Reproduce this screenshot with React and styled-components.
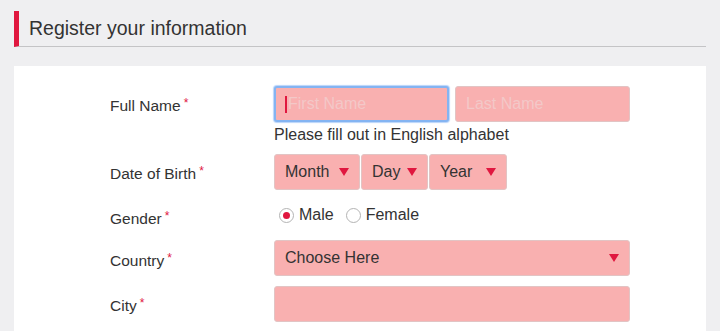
import React from "react";
import styled, { createGlobalStyle, css } from "styled-components";

const Global = createGlobalStyle`
  html, body { margin: 0; padding: 0; }
  body {
    background: #efeff1;
    font-family: "Liberation Sans", Arial, "Noto Sans", sans-serif;
    color: #333;
  }
`;

const Page = styled.div`
  padding: 11px 14px 0;
`;

const Heading = styled.h2`
  margin: 0;
  height: 35px;
  display: flex;
  align-items: center;
  border-left: 5px solid #e0173f;
  border-bottom: 1px solid #c4c4c6;
  padding-left: 10px;
  font-size: 19.5px;
  font-weight: normal;
  color: #333;
`;

const Card = styled.div`
  margin-top: 19px;
  background: #fff;
  padding: 20px 0 20px 96px;
  min-height: 300px;
`;

const Form = styled.div`
  display: grid;
  grid-template-columns: 164px 356px;
  row-gap: 10px;
  align-items: start;
`;

const Label = styled.div`
  box-sizing: border-box;
  height: ${(p) => p.$h || 36}px;
  display: flex;
  align-items: center;
  padding-top: ${(p) => p.$pt ?? 3}px;
  font-size: 15.5px;
  color: #333;
  white-space: nowrap;
`;

const Req = styled.span`
  color: #e0173f;
  font-size: 12px;
  margin-left: 3px;
  position: relative;
  top: -3px;
`;

const Field = styled.div`
  display: flex;
  flex-direction: column;
`;

const InputRow = styled.div`
  display: flex;
  gap: ${(p) => p.$gap ?? 6}px;
`;

const boxBase = css`
  box-sizing: border-box;
  height: 36px;
  background: #f9b0b0;
  border: 1px solid #e2c4c4;
  border-radius: 3px;
  font-family: inherit;
  font-size: 16px;
  color: #333;
`;

const Input = styled.div`
  ${boxBase};
  width: ${(p) => p.$w}px;
  display: flex;
  align-items: center;
  padding-left: 10px;
  ${(p) =>
    p.$focus &&
    css`
      border: 2px solid #84b4f2;
      box-shadow: 0 0 1px 1px #b8d4fa;
      padding-left: 9px;
    `}
`;

const Placeholder = styled.span`
  color: #f3c8c8;
  font-size: 16px;
`;

const Caret = styled.span`
  display: inline-block;
  width: 2px;
  height: 17px;
  background: #e0173f;
  margin-right: 1px;
`;

const Help = styled.div`
  font-size: 16px;
  margin-top: 3px;
  line-height: 19px;
  color: #333;
`;

const Select = styled.div`
  ${boxBase};
  width: ${(p) => p.$w}px;
  display: flex;
  align-items: center;
  justify-content: space-between;
  padding: 0 10px 0 10px;
`;

const Arrow = styled.span`
  width: 0;
  height: 0;
  border-left: 5px solid transparent;
  border-right: 5px solid transparent;
  border-top: 8px solid #e0173f;
`;

const RadioGroup = styled.div`
  height: 30px;
  display: flex;
  align-items: center;
  gap: 12px;
  padding-left: 5px;
  font-size: 16px;
`;

const RadioItem = styled.label`
  display: flex;
  align-items: center;
  gap: 5px;
`;

const RadioCircle = styled.span`
  box-sizing: border-box;
  width: 15px;
  height: 15px;
  border-radius: 50%;
  border: 1px solid #b4b4b4;
  background: #fff;
  display: flex;
  align-items: center;
  justify-content: center;
  &::after {
    content: "";
    width: 7px;
    height: 7px;
    border-radius: 50%;
    background: ${(p) => (p.$checked ? "#e0173f" : "transparent")};
  }
`;

export default function App() {
  return (
    <>
      <Global />
      <Page>
        <Heading>Register your information</Heading>
        <Card>
          <Form>
            <Label $pt={4}>
              Full Name<Req>*</Req>
            </Label>
            <Field>
              <InputRow>
                <Input $w={175} $focus>
                  <Caret />
                  <Placeholder>First Name</Placeholder>
                </Input>
                <Input $w={175}>
                  <Placeholder>Last Name</Placeholder>
                </Input>
              </InputRow>
              <Help>Please fill out in English alphabet</Help>
            </Field>

            <Label $pt={4}>
              Date of Birth<Req>*</Req>
            </Label>
            <InputRow $gap={1}>
              <Select $w={86}>
                Month <Arrow />
              </Select>
              <Select $w={67}>
                Day <Arrow />
              </Select>
              <Select $w={78}>
                Year <Arrow />
              </Select>
            </InputRow>

            <Label $h={30} $pt={8}>
              Gender<Req>*</Req>
            </Label>
            <RadioGroup>
              <RadioItem>
                <RadioCircle $checked /> Male
              </RadioItem>
              <RadioItem>
                <RadioCircle /> Female
              </RadioItem>
            </RadioGroup>

            <Label $pt={5}>
              Country<Req>*</Req>
            </Label>
            <Select $w={356}>
              Choose Here <Arrow />
            </Select>

            <Label $pt={3}>
              City<Req>*</Req>
            </Label>
            <Input $w={356} />
          </Form>
        </Card>
      </Page>
    </>
  );
}
